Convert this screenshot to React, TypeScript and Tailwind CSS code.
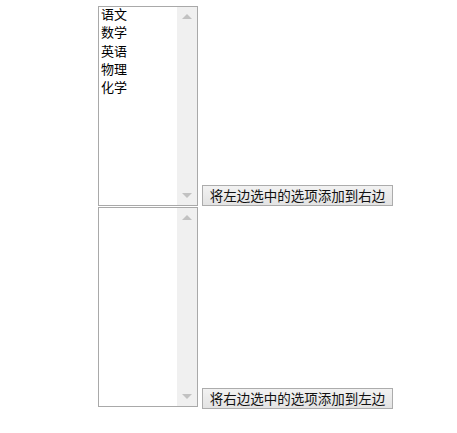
import React from 'react';

const font = { fontFamily: '"Noto Sans CJK SC", "Liberation Sans", sans-serif' };

function ListBox({ items }: { items: string[] }) {
  return (
    <div className="flex h-[200px] w-[100px] border border-[#a9a9a9] bg-white">
      <ul className="-mt-[2px] flex-1 pl-[2px] text-[13px] leading-[18.3px] text-black">
        {items.map((item) => (
          <li key={item}>{item}</li>
        ))}
      </ul>
      {/* scrollbar */}
      <div className="flex w-[20px] flex-col justify-between bg-[#f0f0f0] py-[7px]">
        <div className="mx-auto h-0 w-0 border-x-[5px] border-b-[5px] border-x-transparent border-b-[#c2c2c2]" />
        <div className="mx-auto h-0 w-0 border-x-[5px] border-t-[5px] border-x-transparent border-t-[#c2c2c2]" />
      </div>
    </div>
  );
}

function Btn({ label }: { label: string }) {
  return (
    <button className="ml-[4px] h-[21px] w-[191px] border border-[#acacac] bg-gradient-to-b from-[#f2f2f2] to-[#e3e3e3] text-center text-[13.5px] leading-[19px] text-[#111]">
      {label}
    </button>
  );
}

export default function App() {
  return (
    <div className="h-[433px] w-[457px] bg-white pl-[98px] pt-[6px]" style={font}>
      <div className="flex items-end">
        <ListBox items={['语文', '数学', '英语', '物理', '化学']} />
        <Btn label="将左边选中的选项添加到右边" />
      </div>
      <div className="mt-[1px] flex items-end">
        <ListBox items={[]} />
        <div className="mb-[-2px]">
          <Btn label="将右边选中的选项添加到左边" />
        </div>
      </div>
    </div>
  );
}
